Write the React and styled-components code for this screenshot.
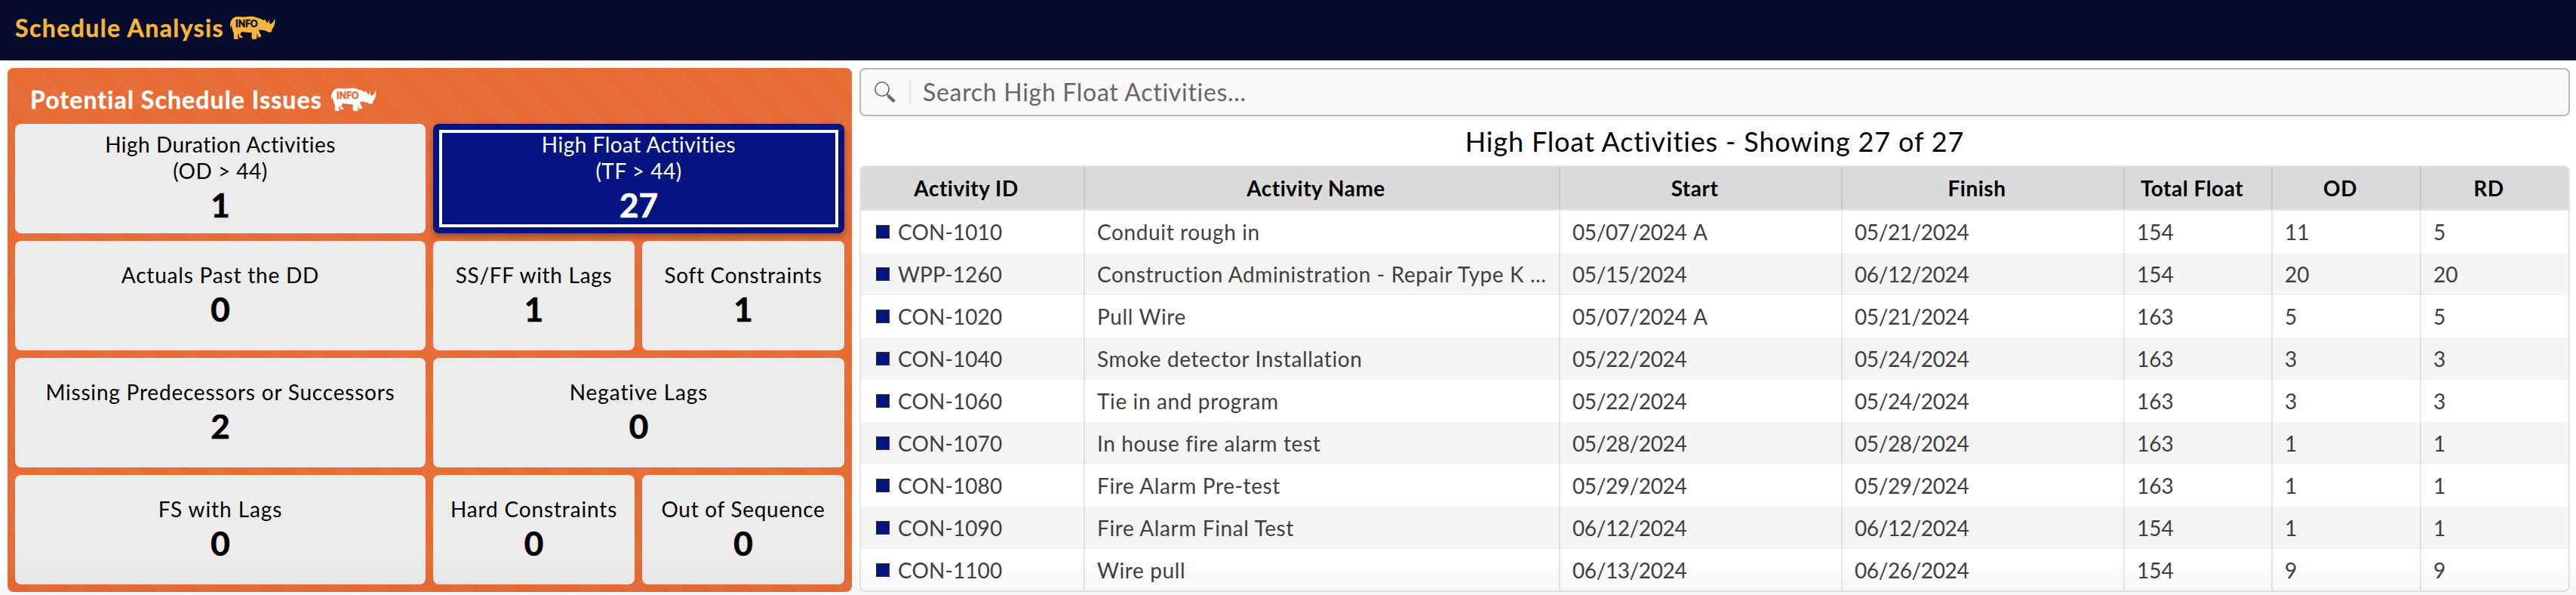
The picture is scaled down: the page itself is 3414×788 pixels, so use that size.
import React from 'react';
import styled, { createGlobalStyle, css } from 'styled-components';

const Global = createGlobalStyle`
  *, *::before, *::after { box-sizing: border-box; }
  html, body { margin: 0; height: 788px; overflow: hidden; background: #fff; }
  body {
    font-family: Lato, "Open Sans", sans-serif;
    font-variant-ligatures: none;
    color: #000;
  }
`;

const Page = styled.div`
  position: relative;
  display: flex;
  flex-direction: column;
  width: 3414px;
  height: 788px;
  overflow: hidden;
`;

const TopBar = styled.header`
  display: flex;
  align-items: center;
  gap: 8px;
  height: 80px;
  padding: 0 20px 6px;
  background: #040b2d;
  color: #f6b53c;
`;

const Heading = styled.h1`
  margin: 0;
  font-size: 32px;
  line-height: 40px;
  font-weight: 700;
  -webkit-text-stroke: 0.4px currentColor;
  white-space: nowrap;
  letter-spacing: ${(p) => p.$track}px;
`;

const Main = styled.main`
  display: flex;
  gap: 10px;
  height: 708px;
  padding: 10px 8px 4px 10px;
`;

const IssuesPanel = styled.section`
  display: flex;
  flex-direction: column;
  width: 1119px;
  height: 694px;
  padding: 0 10px 10px;
  border-radius: 8px;
  background: repeating-linear-gradient(45deg, #e96b34 0 20px, #e7703a 20px 40px);
`;

const IssuesHeader = styled.div`
  display: flex;
  align-items: center;
  gap: 12px;
  height: 74px;
  padding: 10px 20px 0;
  color: #fff;
`;

const CardGrid = styled.div`
  display: grid;
  grid-template-columns: 544px 267px 268px;
  grid-auto-rows: 145px;
  gap: 10px;
`;

const Card = styled.button`
  position: relative;
  display: flex;
  flex-direction: column;
  align-items: center;
  justify-content: center;
  grid-column: span ${(p) => p.$span};
  padding: 0;
  border: 0;
  border-radius: 8px;
  background: #ececec;
  color: #000;
  font: inherit;
  ${(p) => p.$selected && css`
    background: #051480;
    color: #fff;
    box-shadow: 0 4px 8px rgba(0, 0, 0, 0.35);
    outline: 4px solid #fff;
    outline-offset: -12px;
  `}
`;

const CardLabel = styled.span`
  font-size: 28px;
  line-height: 35px;
  white-space: pre-line;
  text-align: center;
  letter-spacing: ${(p) => p.$track}px;
`;

const CardValue = styled.span`
  font-size: 44px;
  line-height: 55px;
  font-weight: 700;
  -webkit-text-stroke: 0.7px currentColor;
`;

const Results = styled.section`
  display: flex;
  flex-direction: column;
  flex: 1;
`;

const SearchBox = styled.div`
  display: flex;
  align-items: center;
  height: 64px;
  padding: 0 17px;
  border: 2px solid #b9b9b9;
  border-radius: 8px;
  background: #f8f8f8;
  color: #666;
`;

const SearchDivider = styled.span`
  width: 2px;
  height: 32px;
  margin: 0 16px 0 17px;
  background: #e4e4e4;
`;

const SearchText = styled.span`
  font-size: 32px;
  line-height: 40px;
  letter-spacing: 0.7px;
`;

const TableTitle = styled.h2`
  margin: 0;
  height: 65px;
  font-size: 36px;
  line-height: 66px;
  font-weight: 400;
  text-align: center;
  letter-spacing: 0.85px;
`;

const Table = styled.div`
  flex: 1;
  min-height: 0;
  overflow: hidden;
  border: 2px solid #e6e6e6;
  border-radius: 8px;
`;

const Row = styled.div`
  display: grid;
  grid-template-columns: 297px 630px 374px 374px 196px 197px 1fr;
  height: 56px;
  background: ${(p) => (p.$odd ? '#f4f4f4' : '#fff')};
`;

const HeadRow = styled(Row)`
  height: 58px;
  border-bottom: 2px solid #e4e4e4;
  background: #dadada;
`;

const HeadCell = styled.div`
  padding-right: 16px;
  border-right: 2px solid #c8c8c8;
  font-size: 28px;
  line-height: 56px;
  font-weight: 700;
  text-align: center;
  letter-spacing: 0.5px;
  &:last-child { border-right: 0; }
`;

const Cell = styled.div`
  display: flex;
  align-items: center;
  padding: 0 16px;
  border-right: 2px solid rgba(0, 0, 0, 0.09);
  color: #3f3f3f;
  font-size: 28px;
  line-height: 56px;
  white-space: nowrap;
  letter-spacing: ${(p) => p.$track}px;
  word-spacing: ${(p) => p.$wordGap || 0}px;
  &:first-child { padding-left: 20px; }
  &:last-child { border-right: 0; }
`;

const Marker = styled.i`
  width: 18px;
  height: 18px;
  margin-right: 11px;
  border: 1px solid #333;
  background: #051480;
`;

const BottomShade = styled.div`
  position: absolute;
  inset: auto 0 0;
  height: 60px;
  pointer-events: none;
  background: linear-gradient(to bottom, rgba(0, 0, 0, 0), rgba(0, 0, 0, 0.035));
`;

const RhinoSvg = styled.svg`
  display: block;
  width: 60px;
  height: 32px;
  flex: none;
`;

const Rhino = ({ ink }) => (
  <RhinoSvg viewBox="0 0 60 32">
    <path
      fill="currentColor"
      d="M4 3C7 0 12 1.2 17 1.4C23 1.6 27 0 32 1.2C35 1.8 36 3 40 3.4L44 6L46 4.5L48 8L50.5 9.5C50 8 50.5 6.5 51.5 5.2C51.6 8 52 9.6 53.5 11C56.5 9.5 58.2 6.5 59.2 3C60 10 58.5 14.5 55.5 17.5L55 21L51.5 22L48 20L43 18.8L38 18.6L38.8 22L41 25.5L40.5 28L36.5 28.2L36.6 26L35.5 23L35.3 30.8L29.5 31L28.5 28L28.8 22.5C25 21.5 20 21.8 15.5 21L13.5 23.5L14 26L16.5 27.5L16.3 29L12.3 28.8L11.6 25.5L11 23L10 27L11.2 30.5L5.5 31L4.8 29L5 24L3.2 19C3 16 1.8 14 1.8 11.5L.8 17L0 13C0 9 1 5.5 4 3Z"
    />
    <text
      x="7"
      y="15.4"
      textLength="29.5"
      lengthAdjust="spacingAndGlyphs"
      fill={ink}
      stroke={ink}
      strokeWidth="0.5"
      fontFamily="Lato, sans-serif"
      fontWeight="900"
      fontSize="13.5"
    >
      INFO
    </text>
  </RhinoSvg>
);

const SearchIcon = () => (
  <svg width="30" height="30" viewBox="0 0 30 30" fill="none" stroke="currentColor">
    <circle cx="11" cy="11" r="9.2" strokeWidth="1.6" />
    <path d="M17.4 17.6L20 20.2" strokeWidth="2" />
    <path d="M18.8 19.4L27.4 27.6" strokeWidth="4.2" />
  </svg>
);

const cards = [
  { label: 'High Duration Activities\n(OD > 44)', value: 1, span: 1, track: 0.5 },
  { label: 'High Float Activities\n(TF > 44)', value: 27, span: 2, track: 0.5, selected: true },
  { label: 'Actuals Past the DD', value: 0, span: 1, track: 0.8 },
  { label: 'SS/FF with Lags', value: 1, span: 1, track: 0.7 },
  { label: 'Soft Constraints', value: 1, span: 1, track: 0.7 },
  { label: 'Missing Predecessors or Successors', value: 2, span: 1, track: 0.79 },
  { label: 'Negative Lags', value: 0, span: 2, track: 0.9 },
  { label: 'FS with Lags', value: 0, span: 1, track: 0.9 },
  { label: 'Hard Constraints', value: 0, span: 1, track: 0.85 },
  { label: 'Out of Sequence', value: 0, span: 1, track: 0.7 },
];

const columns = [
  { title: 'Activity ID', track: 0.1 },
  { title: 'Activity Name', track: 0.62 },
  { title: 'Start', track: -0.4, wordGap: 3 },
  { title: 'Finish', track: -0.4 },
  { title: 'Total Float', track: 0 },
  { title: 'OD', track: 0 },
  { title: 'RD', track: 0 },
];

const rows = [
  ['CON-1010', 'Conduit rough in', '05/07/2024 A', '05/21/2024', 154, 11, 5],
  ['WPP-1260', 'Construction Administration - Repair Type K ...', '05/15/2024', '06/12/2024', 154, 20, 20],
  ['CON-1020', 'Pull Wire', '05/07/2024 A', '05/21/2024', 163, 5, 5],
  ['CON-1040', 'Smoke detector Installation', '05/22/2024', '05/24/2024', 163, 3, 3],
  ['CON-1060', 'Tie in and program', '05/22/2024', '05/24/2024', 163, 3, 3],
  ['CON-1070', 'In house fire alarm test', '05/28/2024', '05/28/2024', 163, 1, 1],
  ['CON-1080', 'Fire Alarm Pre-test', '05/29/2024', '05/29/2024', 163, 1, 1],
  ['CON-1090', 'Fire Alarm Final Test', '06/12/2024', '06/12/2024', 154, 1, 1],
  ['CON-1100', 'Wire pull', '06/13/2024', '06/26/2024', 154, 9, 9],
];

export default function App() {
  return (
    <Page>
      <Global />
      <TopBar>
        <Heading $track={1.4}>Schedule Analysis</Heading>
        <Rhino ink="#040b2d" />
      </TopBar>
      <Main>
        <IssuesPanel>
          <IssuesHeader>
            <Heading as="h2" $track={1.1}>Potential Schedule Issues</Heading>
            <Rhino ink="#e96b34" />
          </IssuesHeader>
          <CardGrid>
            {cards.map((c) => (
              <Card key={c.label} $span={c.span} $selected={c.selected}>
                <CardLabel $track={c.track}>{c.label}</CardLabel>
                <CardValue>{c.value}</CardValue>
              </Card>
            ))}
          </CardGrid>
        </IssuesPanel>
        <Results>
          <SearchBox>
            <SearchIcon />
            <SearchDivider />
            <SearchText>Search High Float Activities...</SearchText>
          </SearchBox>
          <TableTitle>High Float Activities - Showing 27 of 27</TableTitle>
          <Table>
            <HeadRow>
              {columns.map((c) => <HeadCell key={c.title}>{c.title}</HeadCell>)}
            </HeadRow>
            {rows.map((r, i) => (
              <Row key={r[0]} $odd={i % 2 === 1}>
                {r.map((v, j) => (
                  <Cell key={columns[j].title} $track={columns[j].track} $wordGap={columns[j].wordGap}>
                    {j === 0 && <Marker />}
                    {v}
                  </Cell>
                ))}
              </Row>
            ))}
          </Table>
        </Results>
      </Main>
      <BottomShade />
    </Page>
  );
}
